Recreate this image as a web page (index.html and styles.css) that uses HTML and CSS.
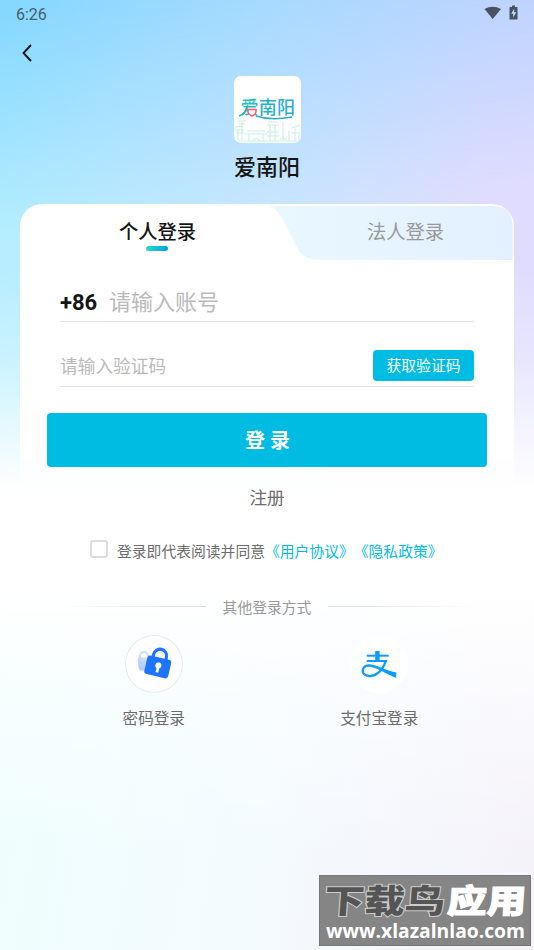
FILE: index.html
```html
<!DOCTYPE html>
<html lang="zh-CN">
<head>
<meta charset="utf-8">
<title>爱南阳</title>
<link rel="stylesheet" href="styles.css">
</head>
<body>
<div class="screen">
  <header class="status">
    <span class="time">6:26</span>
    <svg class="status-icons" width="36" height="18" viewBox="0 0 36 18">
      <path d="M1.500 6Q9.700 1.500 18 6L9.700 16Z" fill="#475361"/>
      <path d="M27 4h2V2.500h3V4h2q.5 0 .5.500v11.500q0 .5-.5.500h-7q-.5 0-.5-.5V4.500q0-.5.500-.5Z" fill="#475361"/>
      <path d="M31.200 5.800l-3 5h2v3.700l3-5.300h-2Z" fill="#c5dcfa"/>
    </svg>
  </header>
  <nav class="nav">
    <svg width="14" height="20" viewBox="0 0 14 20"><path d="M11 2L3.500 10 11 18" fill="none" stroke="#151515" stroke-width="1.900"/></svg>
  </nav>
  <div class="brand">
    <svg class="logo" width="67" height="67" viewBox="0 0 67 67">
      <defs>
        <linearGradient id="ink" x1="0" x2="1"><stop offset="0" stop-color="#25cbb9"/><stop offset=".4" stop-color="#20b4c8"/><stop offset="1" stop-color="#32a7dc"/></linearGradient>
      </defs>
      <rect width="67" height="67" rx="7" fill="#fff"/>
      <g fill="none" stroke="#c7ede3" stroke-width="1">
        <path d="M1 54h9M2 57h8M4 54v10M8 46v18M4 45h8M5 48h6M1 52l3-2 6 1M13 55h18M11 58h22M15 58v7M29 58v7M19 65q3-5 7 0M34 46h10M33 49h12M36 49v16M41 49v16M33 56h12M33 60h12M49 46v17M46 63h7M55 55v10M58 52l8-3M57 57h9M61 52v13M65 57v8M4 65h59"/>
      </g>
      <text x="6.500" y="38" textLength="54.500" class="logo-text" fill="url(#ink)">爱南阳</text>
      <path d="M14 33.500h8v2q0 3-4 4.500-4-1.500-4-4.500Z" fill="#fff" stroke="#ff5964" stroke-width="1.500"/>
      <path d="M5 40q6-2 8-9M22 40q15 5 36 1" fill="none" stroke="#2cabc9" stroke-width="1.500"/>
    </svg>
    <h1 class="title">爱南阳</h1>
  </div>
  <main class="card">
    <div class="tabs">
      <svg class="tab-shape" width="494" height="56" viewBox="0 0 494 56">
        <defs>
          <linearGradient id="tab" x1="0" x2="1"><stop offset="0" stop-color="#e9f8ff"/><stop offset="1" stop-color="#e3f0ff"/></linearGradient>
        </defs>
        <path d="M248 2H472Q492.500 2 492.500 22V56H300C283 56 279 48 273 36L264 18Q256 2 248 2Z" fill="url(#tab)"/>
      </svg>
      <div class="tab active">个人登录</div>
      <div class="tab other">法人登录</div>
    </div>
    <div class="fields">
      <div class="field account"><b class="prefix">+86</b><span>请输入账号</span></div>
      <div class="field code"><span>请输入验证码</span><button class="get-code">获取验证码</button></div>
    </div>
    <button class="login">登 录</button>
    <div class="register">注册</div>
  </main>
  <div class="agreement"><i class="check"></i><span>登录即代表阅读并同意<a>《用户协议》《隐私政策》</a></span></div>
  <div class="divider"><i class="line left"></i><span>其他登录方式</span><i class="line right"></i></div>
  <div class="methods">
    <div class="method">
      <div class="circle bordered">
        <svg width="58" height="58" viewBox="0 0 58 58">
          <defs><linearGradient id="ghost" x1="1" y1="0" x2="0" y2="1"><stop offset="0" stop-color="#dce7ff"/><stop offset="1" stop-color="#a5c5ff"/></linearGradient></defs>
          <path d="M15 23v-2a4 4 0 0 1 8 0v2" fill="none" stroke="#ccdcff" stroke-width="2.200"/>
          <path d="M12.500 24q0-1.500 1.500-1.500h11v13H16q-2 0-2.300-2Z" fill="url(#ghost)"/>
          <g transform="rotate(13 33 32)">
            <path d="M26 24v-3.500a6.500 6.500 0 0 1 13 0v3.500" fill="none" stroke="#1e74fd" stroke-width="3.200"/>
            <rect x="20.500" y="22.500" width="24.500" height="19" rx="3" fill="#1e74fd"/>
            <circle cx="33" cy="30.500" r="3" fill="#fff"/><path d="M31.800 32h2.700v5.500h-2.700z" fill="#fff"/>
          </g>
        </svg>
      </div>
      <span>密码登录</span>
    </div>
    <div class="method">
      <div class="circle">
        <svg width="58" height="58" viewBox="-1.700 0 58 58">
          <g fill="none" stroke="#0a9dff">
            <path d="M15 20.700H37" stroke-width="2"/>
            <path d="M25.700 16v10" stroke-width="4.400"/>
            <path d="M15 26H35.500" stroke-width="2"/>
            <path d="M34 26C31 36 24 41.500 17 41 9 40 9 31 17 30.500 23 30 31 36 44.500 39" stroke-width="2.300"/>
          </g>
          <path d="M27 32.500Q35 36.500 44.500 37.500V43Q36 39.500 27 34.500Z" fill="#0a9dff"/>
        </svg>
      </div>
      <span>支付宝登录</span>
    </div>
  </div>
  <div class="watermark">
    <svg width="210" height="69" viewBox="0 0 210 69">
      <g class="mark-name" transform="translate(3 0) skewX(-4)">
        <text x="3" y="37" textLength="121" lengthAdjust="spacingAndGlyphs" fill="#555" stroke="#ccc" stroke-width="2">下载鸟</text>
        <text x="126" y="37" textLength="79" lengthAdjust="spacingAndGlyphs" fill="#fff" stroke="#fff" stroke-width="1">应用</text>
      </g>
      <text x="6" y="62" textLength="199" lengthAdjust="spacingAndGlyphs" class="mark-url">www.xlazalnlao.com</text>
    </svg>
  </div>
</div>
</body>
</html>
```
FILE: styles.css
```css
* { box-sizing: border-box; }
body { margin: 0; }
svg { display: block; }
button { border: 0; padding: 0; font-family: inherit; color: #fff; background: #00bbe2; }
.screen {
  position: relative;
  isolation: isolate;
  width: 534px;
  height: 950px;
  overflow: hidden;
  font-family: Roboto, "Noto Sans CJK SC", sans-serif;
  text-spacing-trim: space-all;
  color: #6c6c6c;
  background: linear-gradient(90deg, #85d8ff 0%, #a4d9ff 50%, #b7d2ff 100%);
}
.screen::before, .screen::after { content: ""; position: absolute; inset: 0; z-index: -1; }
.screen::before {
  background: linear-gradient(90deg, #b6eeff 0%, #c8e5ff 50%, #dfdcff 92%);
  mask-image: linear-gradient(174deg, transparent 10px, #000 240px);
}
.screen::after {
  background:
    linear-gradient(180deg, rgba(255,255,255,0) 270px, rgba(255,255,255,.25) 355px, #fff 490px, #fff 590px, rgba(255,255,255,.6) 700px, rgba(255,255,255,.2) 850px),
    linear-gradient(100deg, #eafffd 0%, #f1faff 50%, #f3eff8 100%) 0 540px / 534px 410px no-repeat;
}
.status { height: 28px; padding: 0 15px 0 16px; display: flex; align-items: center; justify-content: space-between; }
.time { font-size: 16px; color: #475d6d; }
.status-icons { margin-bottom: 4px; }
.nav { height: 48px; padding: 15px 0 0 20px; }
.brand { height: 128px; display: flex; flex-direction: column; align-items: center; }
.logo-text { font: 500 18px "Noto Sans CJK SC", sans-serif; }
.title { margin: 9px 0 0; font-size: 22px; font-weight: 500; line-height: 32px; color: #151515; }
.card { height: 310px; margin: 0 20px; border-radius: 22px 22px 0 0; background: linear-gradient(#fff 250px, rgba(255,255,255,0)); }
.tabs { position: relative; height: 56px; display: flex; font-size: 19.3px; line-height: 58px; }
.tab-shape { position: absolute; left: 0; top: 0; }
.tab { position: relative; flex: none; text-align: center; }
.active { width: 275px; color: #151515; font-weight: 500; }
.active::after { content: ""; position: absolute; left: 126px; top: 42px; width: 22px; height: 5px; border-radius: 3px; background: linear-gradient(90deg, #25dccb, #079ee7); }
.other { width: 221px; color: #999; }
.fields { padding: 0 40px; color: #bababa; }
.field { display: flex; align-items: center; border-bottom: 1px solid #e7e7e7; }
.account { height: 62px; padding-top: 19px; font-size: 22px; }
.prefix { width: 49px; padding-top: 4px; color: #151515; }
.code { height: 65px; padding-top: 22px; font-size: 17.7px; justify-content: space-between; }
.get-code { width: 101px; height: 31px; border-radius: 4px; padding-top: 1px; font-size: 14.8px; line-height: 30px; }
.login { display: block; width: 440px; height: 54px; margin: 26px auto 0 27px; border-radius: 4px; padding: 0 0 2px 1px; font-size: 20px; font-weight: 600; }
.register { margin-top: 17px; text-align: center; font-size: 17.6px; line-height: 28px; }
.agreement { height: 32px; margin-top: 21px; padding: 0 0 1px 90px; display: flex; align-items: center; gap: 9px; font-size: 14.8px; white-space: nowrap; }
.agreement a { color: #00bbe2; }
.check { width: 18px; height: 18px; margin-bottom: 3px; border: 2px solid #ddd; border-radius: 3px; background: #fff; }
.divider { height: 30px; margin-top: 24px; display: flex; align-items: center; justify-content: center; gap: 17px; font-size: 14.8px; color: #999; }
.line { width: 145px; height: 1px; }
.left { background: linear-gradient(90deg, transparent, #dedede); }
.right { background: linear-gradient(270deg, transparent, #dedede); }
.methods { display: flex; padding: 14px 42px 0 41px; }
.method { flex: 1; display: flex; flex-direction: column; align-items: center; font-size: 15.6px; line-height: 26px; gap: 13px; }
.circle { width: 58px; height: 58px; border-radius: 50%; background: #fff; }
.bordered { box-shadow: inset 0 0 0 1px #e7ecef; }
.watermark { position: absolute; left: 319px; top: 875px; width: 212px; height: 71px; background: #858585; border: 1px solid #777; }
.mark-name { font: 900 33px "Noto Sans CJK SC", sans-serif; paint-order: stroke; }
.mark-url { font: 700 19px "Open Sans", sans-serif; fill: #fff; }
```
